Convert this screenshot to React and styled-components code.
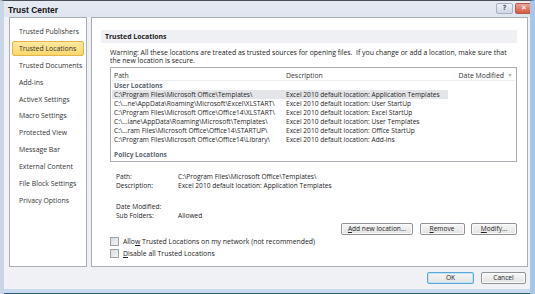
import React from 'react'
import styled, { createGlobalStyle } from 'styled-components'

const Global = createGlobalStyle`
  html, body { margin: 0; padding: 0; background: #fff; }
  body { font-family: "Open Sans", "Liberation Sans", sans-serif; }
`

const navItems = [
  'Trusted Publishers', 'Trusted Locations', 'Trusted Documents', 'Add-ins',
  'ActiveX Settings', 'Macro Settings', 'Protected View', 'Message Bar',
  'External Content', 'File Block Settings', 'Privacy Options',
]

const userRows = [
  ['C:\\Program Files\\Microsoft Office\\Templates\\', 'Excel 2010 default location: Application Templates'],
  ['C:\\...ne\\AppData\\Roaming\\Microsoft\\Excel\\XLSTART\\', 'Excel 2010 default location: User StartUp'],
  ['C:\\Program Files\\Microsoft Office\\Office14\\XLSTART\\', 'Excel 2010 default location: Excel StartUp'],
  ['C:\\...iane\\AppData\\Roaming\\Microsoft\\Templates\\', 'Excel 2010 default location: User Templates'],
  ['C:\\...ram Files\\Microsoft Office\\Office14\\STARTUP\\', 'Excel 2010 default location: Office StartUp'],
  ['C:\\Program Files\\Microsoft Office\\Office14\\Library\\', 'Excel 2010 default location: Add-ins'],
]

const App = () => {
  return (
    <Window>
      <Global />
      <TitleBar>
        <Title>Trust Center</Title>
        <Caption>
          <CapBtn>?</CapBtn>
          <CapBtn $close>✕</CapBtn>
        </Caption>
      </TitleBar>
      <Body>
        <Sidebar>
          {navItems.map((n) => (
            <NavItem key={n} $active={n === 'Trusted Locations'}>{n}</NavItem>
          ))}
        </Sidebar>
        <Main>
          <SectionHead>Trusted Locations</SectionHead>
          <Warning>
            Warning: All these locations are treated as trusted sources for opening files.&nbsp; If you change or add a location, make sure that the new location is secure.
          </Warning>
          <Table>
            <HeadRow>
              <PathCell>Path</PathCell>
              <DescCell>Description</DescCell>
              <DateCell>Date Modified <SortArrow /></DateCell>
            </HeadRow>
            <Group>User Locations</Group>
            {userRows.map((r, i) => (
              <Row key={i} $selected={i === 0}>
                <PathCell>{r[0]}</PathCell>
                <DescCell>{r[1]}</DescCell>
              </Row>
            ))}
            <Group $policy>Policy Locations</Group>
          </Table>
          <Details>
            <Label>Path:</Label><Value>C:\Program Files\Microsoft Office\Templates\</Value>
            <Label>Description:</Label><Value>Excel 2010 default location: Application Templates</Value>
            <Label /><Value />
            <Label>Date Modified:</Label><Value />
            <Label>Sub Folders:</Label><Value>Allowed</Value>
          </Details>
          <ActionRow>
            <Button $w={72}><u>A</u>dd new location...</Button>
            <Button $w={45}><u>R</u>emove</Button>
            <Button $w={46}><u>M</u>odify...</Button>
          </ActionRow>
          <Check $first><Box /><span>Allo<u>w</u> Trusted Locations on my network (not recommended)</span></Check>
          <Check><Box /><span><u>D</u>isable all Trusted Locations</span></Check>
        </Main>
      </Body>
      <Footer>
        <Button $w={47} $h={12} $default>OK</Button>
        <Button $w={45} $h={12}>Cancel</Button>
      </Footer>
      <BottomFrame />
    </Window>
  )
}

const Window = styled.div`
  width: 535px;
  height: 294px;
  box-sizing: border-box;
  border-top: 1px solid #4a4f57;
  border-left: 4px solid #c9d6e6;
  border-right: 5px solid #a8c6e6;
  background: #eff1f4;
  display: flex;
  flex-direction: column;
  overflow: hidden;
  color: #1e1e1e;
`

const TitleBar = styled.div`
  height: 16px;
  flex: none;
  display: flex;
  align-items: center;
  justify-content: space-between;
  background: linear-gradient(#e6ebf2, #dfe5ee);
  margin-left: -4px;
  padding-left: 8px;
`

const Title = styled.div`
  font-family: "Liberation Sans", sans-serif;
  font-weight: bold;
  font-size: 8.5px;
  color: #111;
  padding-top: 2px;
`

const Caption = styled.div`
  display: flex;
  gap: 2px;
  align-self: flex-start;
  margin-top: 2px;
  margin-right: -3px;
`

const CapBtn = styled.div`
  width: ${(p) => (p.$close ? 16 : 15)}px;
  height: 9px;
  border: 1px solid ${(p) => (p.$close ? '#b9574a' : '#a7b2c0')};
  border-radius: 2px;
  background: ${(p) => (p.$close ? 'linear-gradient(#e8a393, #d15a44)' : 'linear-gradient(#eef2f7, #cdd6e2)')};
  color: ${(p) => (p.$close ? '#fff' : '#55606e')};
  font-size: 7px;
  line-height: 9px;
  text-align: center;
  font-weight: bold;
  font-family: "DejaVu Sans", sans-serif;
`

const Body = styled.div`
  display: flex;
  gap: 4px;
  padding: 0 2px 0 5px;
  height: 250px;
  flex: none;
`

const Sidebar = styled.div`
  width: 78px;
  box-sizing: border-box;
  background: #fff;
  border: 1px solid #a8adb3;
  padding: 6px 2px 0 2px;
  display: flex;
  flex-direction: column;
`

const NavItem = styled.div`
  height: 15px;
  margin-bottom: 1.9px;
  box-sizing: border-box;
  padding-left: 6px;
  font-size: 6.9px;
  line-height: 14px;
  color: #333;
  white-space: nowrap;
  border: 1px solid ${(p) => (p.$active ? '#e3b54a' : 'transparent')};
  border-radius: 2px;
  background: ${(p) => (p.$active ? 'linear-gradient(#fde9a2, #fbd66a)' : 'transparent')};
`

const Main = styled.div`
  flex: 1;
  background: #fff;
  border: 1px solid #a8adb3;
  padding: 12px 10px 0 18px;
  display: flex;
  flex-direction: column;
`

const SectionHead = styled.div`
  margin-left: -9px;
  height: 13px;
  flex: none;
  background: #eef0f3;
  font-size: 6.9px;
  font-weight: bold;
  line-height: 13px;
  padding-left: 4px;
  color: #222;
`

const Warning = styled.div`
  margin-top: 6px;
  font-size: 6.9px;
  line-height: 8px;
  color: #222;
  padding-right: 8px;
`

const Table = styled.div`
  margin-top: 2px;
  height: 95px;
  flex: none;
  box-sizing: border-box;
  border: 1px solid #a8adb3;
  padding: 0 1px;
`

const HeadRow = styled.div`
  display: flex;
  height: 13px;
  box-sizing: border-box;
  padding-top: 2px;
  align-items: center;
  font-size: 6.9px;
  color: #333;
  border-bottom: 1px solid #eceff2;
`

const Row = styled.div`
  display: flex;
  width: 336px;
  height: 9px;
  align-items: center;
  font-size: 6.6px;
  color: #1d1d1d;
  background: ${(p) => (p.$selected ? '#e4e5e8' : 'transparent')};
  white-space: nowrap;
`

const PathCell = styled.div`
  width: 172px;
  flex: none;
  padding-left: 2px;
  overflow: hidden;
`

const DescCell = styled.div`
  flex: 1;
`

const DateCell = styled.div`
  width: 64px;
  display: flex;
  align-items: center;
  justify-content: flex-end;
  gap: 4px;
  padding-right: 3px;
`

const SortArrow = styled.span`
  width: 0;
  height: 0;
  border-left: 2.5px solid transparent;
  border-right: 2.5px solid transparent;
  border-top: 3px solid #b4b9bf;
`

const Group = styled.div`
  height: 9px;
  font-size: 6.6px;
  font-weight: bold;
  color: #5c6672;
  padding-left: 2px;
  line-height: 9px;
  margin-top: ${(p) => (p.$policy ? '6px' : '0')};
`

const Details = styled.div`
  display: grid;
  grid-template-columns: 62px 1fr;
  grid-template-rows: 9px 9px 12.5px 9px 9px;
  margin: 9.5px 0 0 6px;
  font-size: 6.6px;
  line-height: 9px;
  color: #222;
`

const Label = styled.div``
const Value = styled.div``

const ActionRow = styled.div`
  display: flex;
  justify-content: flex-end;
  gap: 6.5px;
  margin-top: 2.5px;
`

const Button = styled.div`
  width: ${(p) => p.$w}px;
  height: ${(p) => p.$h || 12}px;
  box-sizing: border-box;
  border: 1px solid ${(p) => (p.$default ? '#5aa6d6' : '#8e9399')};
  border-radius: 2px;
  background: linear-gradient(#f6f6f6, #e3e3e3);
  font-size: 6.6px;
  line-height: ${(p) => (p.$h || 12) - 2}px;
  text-align: center;
  color: #222;
  white-space: nowrap;
  box-shadow: inset 0 0 0 1px ${(p) => (p.$default ? '#bfe3f7' : '#fbfbfb')};
`

const Check = styled.div`
  display: flex;
  align-items: center;
  gap: 4px;
  height: 9px;
  margin-top: ${(p) => (p.$first ? '2.5px' : '3px')};
  font-size: 6.9px;
  color: #222;
  white-space: nowrap;
`

const Box = styled.span`
  width: 7px;
  height: 7px;
  flex: none;
  border: 1px solid #9ea3a9;
  background: linear-gradient(135deg, #d9dcdf, #f5f5f5);
`

const Footer = styled.div`
  display: flex;
  justify-content: flex-end;
  gap: 7px;
  padding: 5px 4px 0 0;
  height: 22px;
  flex: none;
  box-sizing: border-box;
`

const BottomFrame = styled.div`
  margin: 0 -5px 0 -4px;
  flex: 1;
  background: #c6dbf0;
  border-bottom: 1px solid #2c5d6e;
`

export default App
